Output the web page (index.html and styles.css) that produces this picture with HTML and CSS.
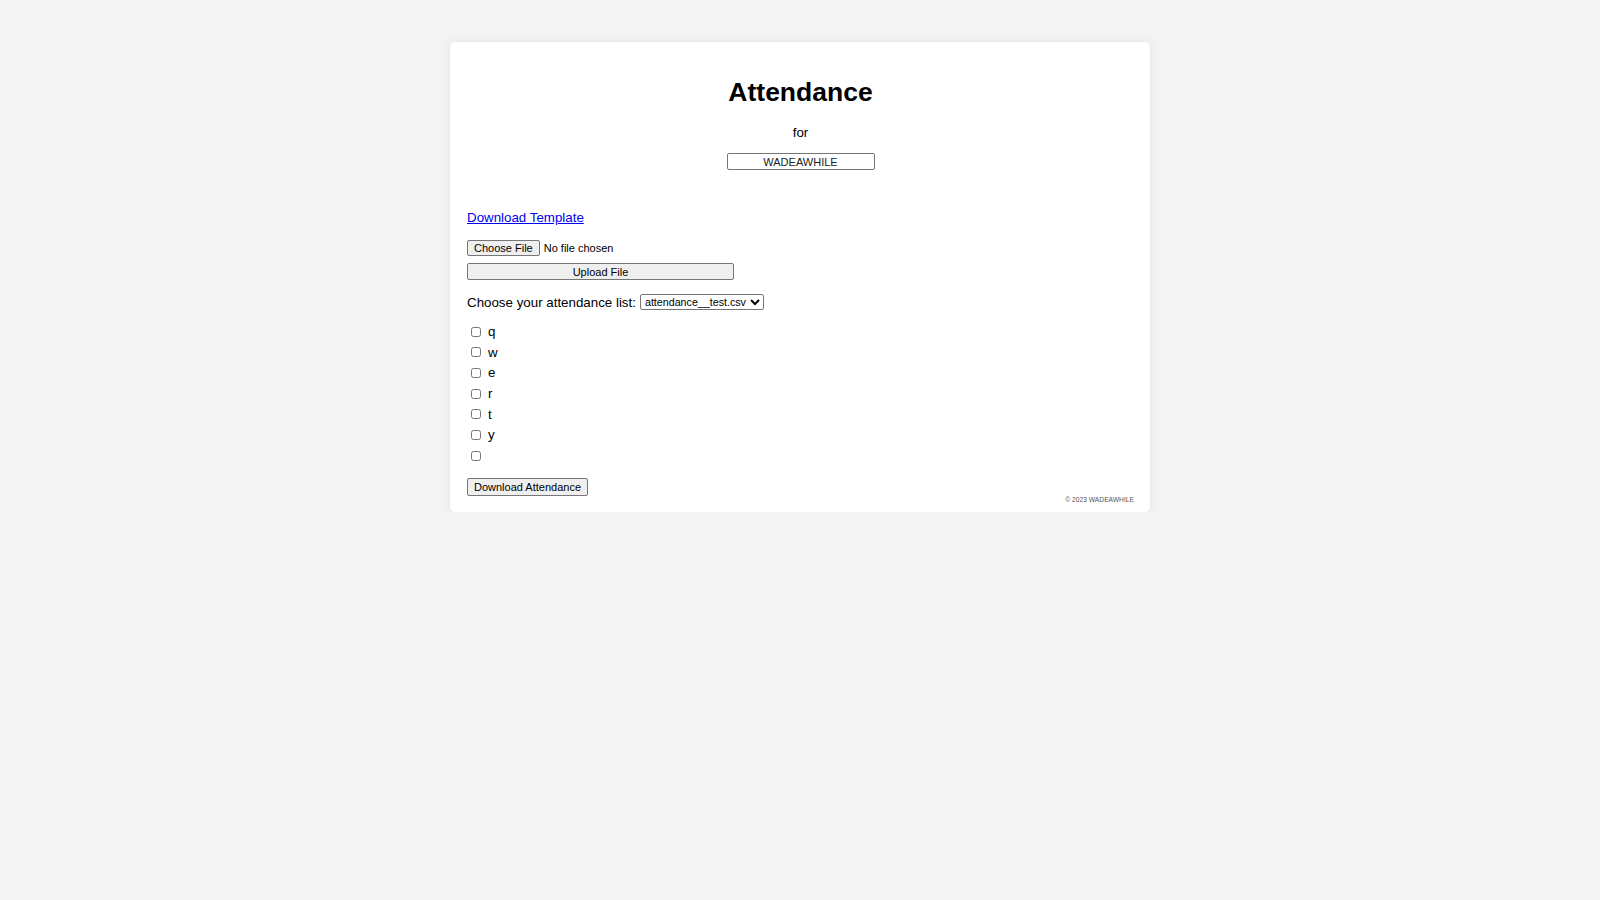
FILE: index.html
```html
<!DOCTYPE html>
<html lang="en">
<head>
<meta charset="utf-8">
<title>Attendance</title>
<link rel="stylesheet" href="styles.css">
</head>
<body>
<main class="card">
  <header class="head">
    <h1 class="title">Attendance</h1>
    <p class="for">for</p>
    <input class="org" type="text" value="WADEAWHILE" readonly>
  </header>

  <a class="template-link" href="#">Download Template</a>

  <form class="upload">
    <input class="file" type="file">
    <button class="upload-btn" type="button">Upload File</button>
  </form>

  <div class="choose-row">
    <label class="choose-label" for="list">Choose your attendance list:</label>
    <select class="list-select" id="list">
      <option>attendance__test.csv</option>
    </select>
  </div>

  <ul class="names">
    <li class="name"><input class="check" type="checkbox"><span>q</span></li>
    <li class="name"><input class="check" type="checkbox"><span>w</span></li>
    <li class="name"><input class="check" type="checkbox"><span>e</span></li>
    <li class="name"><input class="check" type="checkbox"><span>r</span></li>
    <li class="name"><input class="check" type="checkbox"><span>t</span></li>
    <li class="name"><input class="check" type="checkbox"><span>y</span></li>
    <li class="name"><input class="check" type="checkbox"><span></span></li>
  </ul>

  <div class="bottom-row">
    <button class="download-btn" type="button">Download Attendance</button>
    <footer class="copyright">© 2023 WADEAWHILE</footer>
  </div>
</main>
</body>
</html>
```

FILE: styles.css
```css
html, body {
  margin: 0;
  padding: 0;
}

body {
  background: #f3f3f3;
  font-family: "Liberation Sans", Arial, sans-serif;
  color: #000;
  font-size: 13.33px;
}

.card {
  box-sizing: border-box;
  width: 700px;
  margin: 42px auto 0;
  padding: 16px 16px 8px 17px;
  background: #fff;
  border-radius: 5px;
  box-shadow: 0 0 8px rgba(0, 0, 0, 0.08);
  display: flex;
  flex-direction: column;
  align-items: flex-start;
}

.head {
  align-self: stretch;
  display: flex;
  flex-direction: column;
  align-items: center;
}

.title {
  margin: 19px 0 0;
  font-size: 26.5px;
  line-height: 30px;
  font-weight: bold;
}

.for {
  margin: 18px 0 0;
  font-size: 13.33px;
  line-height: 15px;
}

.org {
  box-sizing: border-box;
  margin: 13px 0 0;
  width: 148px;
  height: 17px;
  padding: 0 4px;
  border: 1px solid #767676;
  border-radius: 2px;
  font-family: "Liberation Sans", Arial, sans-serif;
  font-size: 11px;
  color: #222;
  text-align: center;
  background: #fff;
  outline: none;
}

.template-link {
  margin-top: 40px;
  font-size: 13.33px;
  line-height: 15px;
  color: #0000ee;
  text-decoration: underline;
}

.upload {
  margin: 15px 0 0;
  display: flex;
  flex-direction: column;
  align-items: flex-start;
  gap: 7px;
}

.file {
  font-family: "Liberation Sans", Arial, sans-serif;
  font-size: 11px;
  height: 16px;
  color: #000;
}

.file::file-selector-button {
  box-sizing: border-box;
  height: 16px;
  padding: 0 6px;
  margin-right: 4px;
  font-family: "Liberation Sans", Arial, sans-serif;
  font-size: 11px;
  background: #efefef;
  border: 1px solid #767676;
  border-radius: 2px;
  color: #000;
}

.upload-btn,
.download-btn {
  box-sizing: border-box;
  font-family: "Liberation Sans", Arial, sans-serif;
  font-size: 11px;
  color: #000;
  background: #efefef;
  border: 1px solid #767676;
  border-radius: 2px;
  padding: 0 6px;
}

.upload-btn {
  width: 267px;
  height: 17px;
}

.choose-row {
  margin-top: 14px;
  display: flex;
  align-items: center;
  gap: 4px;
}

.choose-label {
  font-size: 13.33px;
  line-height: 15px;
}

.list-select {
  box-sizing: border-box;
  height: 16px;
  width: 124px;
  font-family: "Liberation Sans", Arial, sans-serif;
  font-size: 10.7px;
  padding: 0;
  border: 1px solid #767676;
  border-radius: 2px;
  background: #fff;
  color: #000;
}

.names {
  list-style: none;
  margin: 14px 0 0;
  padding: 0;
  display: flex;
  flex-direction: column;
  gap: 5.7px;
}

.name {
  display: flex;
  align-items: center;
  height: 15px;
  font-size: 13.33px;
  line-height: 15px;
}

.check {
  width: 10px;
  height: 10px;
  margin: 0 7px 0 4px;
}

.bottom-row {
  align-self: stretch;
  margin-top: 15px;
  display: flex;
  justify-content: space-between;
  align-items: flex-end;
}

.download-btn {
  height: 18px;
  margin-bottom: 8px;
}

.copyright {
  font-size: 6.7px;
  line-height: 8px;
  color: #555;
}
```
